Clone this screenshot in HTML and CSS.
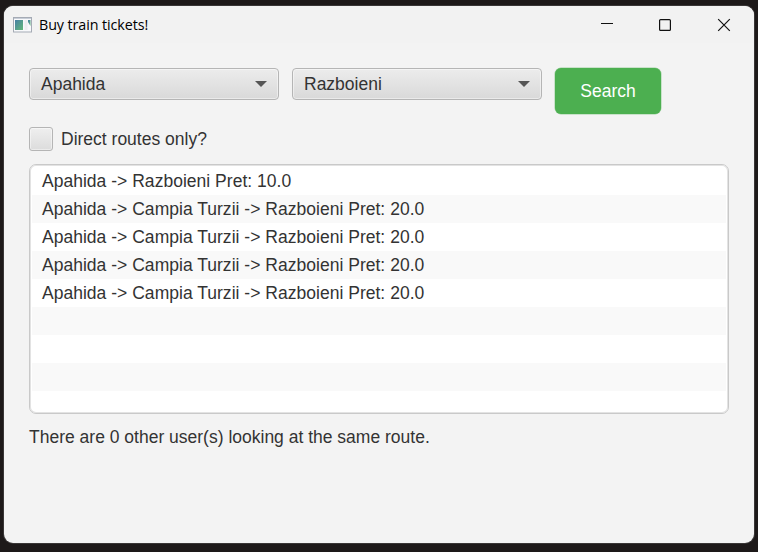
FILE: index.html
```html
<!DOCTYPE html>
<html lang="en">
<head>
<meta charset="utf-8">
<title>Buy train tickets!</title>
<link rel="stylesheet" href="styles.css">
</head>
<body>
<main class="window">
  <header class="titlebar">
    <svg class="app-icon" width="20" height="16" viewBox="0 0 20 16">
      <defs><linearGradient id="screen" x1="0" y1="0" x2="1" y2="1"><stop offset="0" stop-color="#477fa5"/><stop offset="1" stop-color="#62b978"/></linearGradient></defs>
      <rect x=".5" y=".5" width="18" height="14.5" fill="#f8f9fb" stroke="#a5abb5"/>
      <path d="M1 1.5h17" stroke="#c7cdd7"/>
      <rect x="2" y="3" width="8" height="10" fill="url(#screen)"/>
      <path d="M11.5 3h3v10h-3z" fill="#eceef0"/>
      <path d="M15 3h2.500v6L15 5z" fill="url(#screen)"/>
    </svg>
    <h1 class="title">Buy train tickets!</h1>
    <svg class="controls" width="132" height="14" viewBox="0 0 132 14" fill="none" stroke="#111">
      <path d="M1 5.500h12" />
      <rect x="59.600" y="1.600" width="10.800" height="10.800" rx="1" stroke-width="1.200"/>
      <path d="M118.200 1.200l11.600 11.600M129.800 1.200l-11.600 11.600" stroke-width="1.200"/>
    </svg>
  </header>
  <section class="content">
    <div class="search-row">
      <div class="combo"><span>Apahida</span><i class="arrow"></i></div>
      <div class="combo"><span>Razboieni</span><i class="arrow"></i></div>
      <button class="search">Search</button>
    </div>
    <label class="direct"><span class="box"></span><span>Direct routes only?</span></label>
    <ul class="routes">
      <li>Apahida -&gt; Razboieni Pret: 10.0</li>
      <li>Apahida -&gt; Campia Turzii -&gt; Razboieni Pret: 20.0</li>
      <li>Apahida -&gt; Campia Turzii -&gt; Razboieni Pret: 20.0</li>
      <li>Apahida -&gt; Campia Turzii -&gt; Razboieni Pret: 20.0</li>
      <li>Apahida -&gt; Campia Turzii -&gt; Razboieni Pret: 20.0</li>
      <li></li>
      <li></li>
      <li></li>
      <li></li>
    </ul>
    <p class="status">There are 0 other user(s) looking at the same route.</p>
  </section>
</main>
</body>
</html>
```
FILE: styles.css
```css
* { box-sizing: border-box; }
body {
  margin: 0;
  height: 552px;
  padding: 6px 4px 9px;
  overflow: hidden;
  background: #1d1919;
  font: 17.5px/28px "Liberation Sans", Arial, sans-serif;
  color: #333;
}
.window {
  height: 537px;
  border-radius: 9px;
  background: #f3f3f3;
  box-shadow: 0 0 0 1px #393636;
  overflow: hidden;
}
.titlebar {
  display: flex;
  align-items: center;
  height: 37px;
  padding: 0 22px 0 9px;
  background: #f2f2f2;
}
.app-icon { margin-right: 6px; }
.title {
  margin: 0;
  font: 400 14.3px/20px "Open Sans", "Noto Sans", sans-serif;
  letter-spacing: -.08px;
  color: #000;
}
.controls { margin-left: auto; }
.content { padding: 25px 25px 0; }
.search-row {
  display: flex;
  align-items: flex-start;
  gap: 13px;
  height: 46px;
}
.combo {
  display: flex;
  align-items: center;
  justify-content: space-between;
  width: 250px;
  height: 32px;
  padding: 0 11px;
  border: 1px solid #b5b5b5;
  border-radius: 4px;
  background: linear-gradient(#ececec, #d9d9d9);
  box-shadow: inset 0 0 0 1px #ffffff70;
}
.arrow {
  border: 6px solid transparent;
  border-top-color: #555;
  border-bottom: 0;
}
.search {
  width: 106px;
  height: 46px;
  padding: 0;
  border: 0;
  border-radius: 6px;
  background: #4caf50;
  box-shadow: 0 0 0 .5px #4caf5080;
  color: #fff;
  font: inherit;
}
.direct {
  display: flex;
  align-items: center;
  gap: 8px;
  height: 24px;
  margin-top: 13px;
}
.box {
  width: 24px;
  height: 24px;
  border: 1px solid #b5b5b5;
  border-radius: 3px;
  background: linear-gradient(#efefef, #dcdcdc);
  box-shadow: inset 0 0 0 1px #ffffff70;
}
.routes {
  height: 250px;
  margin: 13px 0 0;
  padding: 2px;
  border: 1px solid #c9c9c9;
  border-radius: 7px;
  background: #fff;
  box-shadow: inset 0 0 0 1px #e3e3e3;
  list-style: none;
  overflow: hidden;
}
.routes li { height: 28px; padding-left: 10px; letter-spacing: .02px; }
.routes li:last-child { height: 21px; }
.routes li:nth-child(even) { background: #f9f9f9; }
.status { margin: 9px 0 0; }
```
